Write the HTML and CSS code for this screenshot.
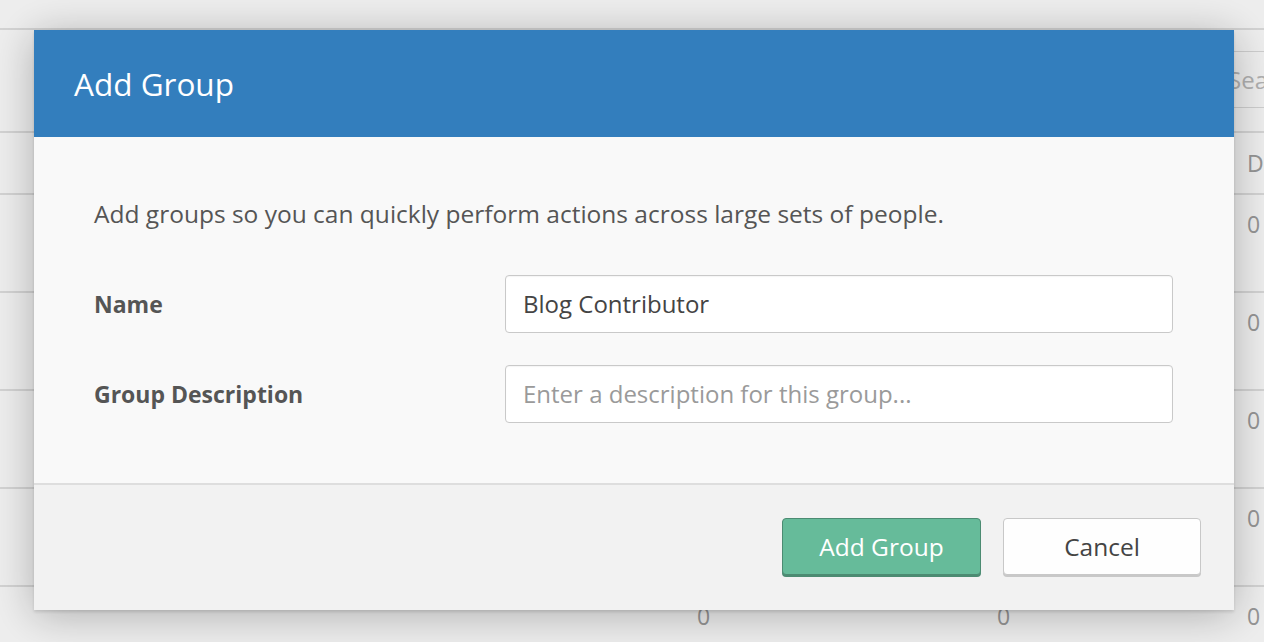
FILE: index.html
```html
<!DOCTYPE html>
<html>
<head>
<meta charset="utf-8">
<link rel="stylesheet" href="styles.css">
</head>
<body>
<div class="page">
  <div class="topbar"></div>
  <div class="toolbar">
    <div class="search">Search</div>
  </div>
  <div class="thead">
    <div></div><div></div><div></div><div class="th">Date</div>
  </div>
  <div class="row"><div></div><div class="cell">0</div><div class="cell">0</div><div class="cell">0</div></div>
  <div class="row"><div></div><div class="cell">0</div><div class="cell">0</div><div class="cell">0</div></div>
  <div class="row"><div></div><div class="cell">0</div><div class="cell">0</div><div class="cell">0</div></div>
  <div class="row"><div></div><div class="cell">0</div><div class="cell">0</div><div class="cell">0</div></div>
  <div class="row"><div></div><div class="cell">0</div><div class="cell">0</div><div class="cell">0</div></div>
</div>
<div class="overlay"></div>
<div class="modal">
  <div class="modal-header">Add Group</div>
  <div class="modal-body">
    <p class="intro">Add groups so you can quickly perform actions across large sets of people.</p>
    <div class="form">
      <label class="label">Name</label>
      <div class="input">Blog Contributor</div>
      <label class="label">Group Description</label>
      <div class="input placeholder">Enter a description for this group...</div>
    </div>
  </div>
  <div class="modal-footer">
    <button class="btn btn-primary">Add Group</button>
    <button class="btn btn-default">Cancel</button>
  </div>
</div>
</body>
</html>
```
FILE: styles.css
```css
html, body {
  margin: 0;
  padding: 0;
  width: 1264px;
  height: 642px;
  overflow: hidden;
  background: #fff;
  font-family: "Open Sans", "Lato", sans-serif;
}
.page {
  width: 1264px;
  height: 642px;
  overflow: hidden;
  color: #a0a0a0;
  font-size: 23px;
}
.topbar {
  height: 28px;
  border-bottom: 2px solid #e2e2e2;
}
.toolbar {
  height: 101px;
  border-bottom: 2px solid #e2e2e2;
  display: flex;
  align-items: flex-start;
  justify-content: flex-end;
}
.search {
  margin-top: 21px;
  width: 36px;
  height: 55px;
  border-top: 1px solid #ddd;
  border-bottom: 1px solid #ddd;
  line-height: 55px;
  overflow: hidden;
  white-space: nowrap;
  color: #bdbdbd;
  font-size: 24px;
}
.thead {
  height: 60px;
  border-bottom: 2px solid #e2e2e2;
  display: grid;
  grid-template-columns: 697px 300px 250px 1fr;
  align-items: center;
}
.th { color: #a0a0a0; }
.row {
  height: 96px;
  border-bottom: 2px solid #e2e2e2;
  display: grid;
  grid-template-columns: 697px 300px 250px 1fr;
  align-items: start;
}
.row .cell {
  padding-top: 17px;
  line-height: 24px;
}
.overlay {
  position: fixed;
  inset: 0;
  background: rgba(0, 0, 0, 0.07);
}
.modal {
  position: fixed;
  left: 34px;
  top: 30px;
  width: 1200px;
  box-shadow: 0 5px 40px rgba(0, 0, 0, 0.27), 0 2px 3px rgba(0, 0, 0, 0.12);
  display: flex;
  flex-direction: column;
}
.modal-header {
  height: 107px;
  background: #337ebd;
  color: #fff;
  font-size: 31.5px;
  line-height: 107px;
  padding-left: 40px;
}
.modal-body {
  background: #f9f9f9;
  padding: 62px 61px 60px 60px;
  border-bottom: 2px solid #dedede;
}
.intro {
  margin: 0;
  font-size: 24.5px;
  line-height: 30px;
  color: #555;
}
.form {
  margin-top: 46px;
  display: grid;
  grid-template-columns: 411px 1fr;
  row-gap: 32px;
  align-items: center;
}
.label {
  font-weight: 700;
  font-size: 23px;
  color: #555;
}
.input {
  height: 56px;
  border: 1px solid #c9c9c9;
  border-radius: 4px;
  background: #fff;
  box-shadow: inset 0 1px 1px rgba(0,0,0,0.04);
  padding: 0 17px;
  line-height: 56px;
  font-size: 24px;
  color: #444;
}
.input.placeholder { color: #9a9a9a; }
.modal-footer {
  background: #f2f2f2;
  height: 125px;
  padding: 33px 33px 0 0;
  display: flex;
  justify-content: flex-end;
  align-items: flex-start;
  gap: 22px;
  box-sizing: border-box;
}
.btn {
  width: 198px;
  height: 57px;
  border-radius: 4px;
  font-family: inherit;
  font-size: 24.5px;
  cursor: pointer;
}
.btn-primary {
  background: #66bb9a;
  border: 1px solid #4c8b72;
  color: #fff;
  box-shadow: 0 2px 0 #4c8b72;
  width: 199px;
}
.btn-default {
  background: #fefefe;
  border: 1px solid #c8c8c8;
  color: #444;
  box-shadow: 0 2px 0 #c8c8c8;
}
```
